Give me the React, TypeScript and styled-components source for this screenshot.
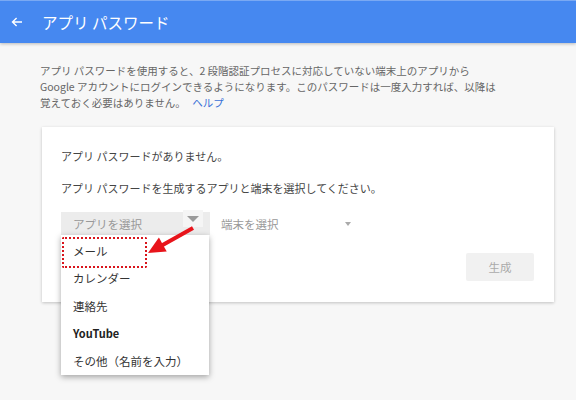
import React from "react";
import styled, { createGlobalStyle } from "styled-components";

const GlobalStyle = createGlobalStyle`
  html, body {
    margin: 0;
    padding: 0;
    background: #f7f7f7;
    font-family: "Noto Sans CJK JP", "Noto Sans", sans-serif;
  }
`;

const menuItems = [
  { label: "メール", bold: false },
  { label: "カレンダー", bold: false },
  { label: "連絡先", bold: false },
  { label: "YouTube", bold: true },
  { label: "その他（名前を入力）", bold: false },
];

export default function App() {
  return (
    <Page>
      <GlobalStyle />
      <Header>
        <BackIcon viewBox="0 0 12 12">
          <path d="M11 6H1.8M5.6 2L1.5 6l4.1 4" fill="none" stroke="#fff" strokeWidth="1.4" />
        </BackIcon>
        <Title>アプリ パスワード</Title>
      </Header>
      <Content>
        <Description>
          アプリ パスワードを使用すると、2 段階認証プロセスに対応していない端末上のアプリから
          <br />
          Google アカウントにログインできるようになります。このパスワードは一度入力すれば、以降は
          <br />
          覚えておく必要はありません。 <HelpLink>ヘルプ</HelpLink>
        </Description>
        <Card>
          <CardText>アプリ パスワードがありません。</CardText>
          <CardText>アプリ パスワードを生成するアプリと端末を選択してください。</CardText>
          <SelectRow>
            <AppSelect>
              <SelectLabel>アプリを選択</SelectLabel>
              <ArrowBox>
                <Caret />
              </ArrowBox>
              <Menu>
                {menuItems.map((item) => (
                  <MenuItem key={item.label} $bold={item.bold}>
                    {item.label}
                  </MenuItem>
                ))}
                <Highlight />
              </Menu>
            </AppSelect>
            <DeviceSelect>
              <SelectLabel>端末を選択</SelectLabel>
              <Caret $small />
            </DeviceSelect>
          </SelectRow>
          <ButtonRow>
            <GenerateButton>生成</GenerateButton>
          </ButtonRow>
        </Card>
      </Content>
      <Pointer viewBox="0 0 576 400">
        <line x1="193" y1="228" x2="160" y2="246.5" stroke="#e8141b" strokeWidth="4" />
        <polygon points="148,253 158.9,237.6 166.7,251.6" fill="#e8141b" />
      </Pointer>
    </Page>
  );
}

const Page = styled.div`
  position: relative;
  width: 576px;
  height: 400px;
  overflow: hidden;
  background: #f7f7f7;
`;

const Header = styled.div`
  height: 43px;
  background: #4688f0;
  border-top: 1px solid #7aa9f3;
  box-sizing: border-box;
  box-shadow: 0 1px 3px rgba(0, 0, 0, 0.25);
  display: flex;
  align-items: center;
  padding-left: 11px;
`;

const BackIcon = styled.svg`
  width: 12px;
  height: 12px;
  margin-right: 19px;
`;

const Title = styled.div`
  color: #fff;
  font-size: 15.5px;
  font-weight: 400;
`;

const Content = styled.div`
  padding: 0 22px 0 42px;
`;

const Description = styled.p`
  margin: 20px 0 0 -2px;
  font-size: 10.5px;
  line-height: 16px;
  color: #666;
  white-space: nowrap;
`;

const HelpLink = styled.a`
  color: #3b72d8;
  margin-left: 4px;
`;

const Card = styled.div`
  margin-top: 16px;
  width: 512px;
  box-sizing: border-box;
  background: #fff;
  box-shadow: 0 1px 3px rgba(0, 0, 0, 0.22);
  padding: 21px 20px 21px 19px;
  display: flex;
  flex-direction: column;
`;

const CardText = styled.div`
  font-size: 11px;
  line-height: 16px;
  color: #444;
  margin-bottom: 16px;
`;

const SelectRow = styled.div`
  display: flex;
  align-items: center;
  gap: 11px;
`;

const AppSelect = styled.div`
  position: relative;
  width: 149px;
  height: 23px;
  background: #ececec;
  display: flex;
  align-items: center;
  padding-left: 12px;
  box-sizing: border-box;
`;

const SelectLabel = styled.span`
  font-size: 11.5px;
  color: #999;
  flex: 1;
`;

const ArrowBox = styled.div`
  position: absolute;
  right: 7px;
  top: -2px;
  width: 20px;
  height: 17px;
  background: #f5f5f5;
  display: flex;
  align-items: center;
  justify-content: center;
`;

const Caret = styled.span<{ $small?: boolean }>`
  width: 0;
  height: 0;
  border-left: ${(p) => (p.$small ? 3.5 : 6)}px solid transparent;
  border-right: ${(p) => (p.$small ? 3.5 : 6)}px solid transparent;
  border-top: ${(p) => (p.$small ? 4 : 6)}px solid ${(p) => (p.$small ? "#aaa" : "#9a9a9a")};
`;

const DeviceSelect = styled.div`
  width: 130px;
  height: 23px;
  display: flex;
  align-items: center;
  padding-right: 2px;
`;

const Menu = styled.div`
  position: absolute;
  left: 0;
  top: 23px;
  width: 148px;
  padding-top: 2px;
  background: #fff;
  box-shadow: 0 2px 6px rgba(0, 0, 0, 0.35);
  z-index: 2;
`;

const MenuItem = styled.div<{ $bold: boolean }>`
  height: 27.5px;
  display: flex;
  align-items: center;
  padding-left: 12px;
  font-size: ${(p) => (p.$bold ? 11 : 11.5)}px;
  color: ${(p) => (p.$bold ? "#222" : "#333")};
  font-weight: ${(p) => (p.$bold ? 700 : 400)};
`;

const Highlight = styled.div`
  position: absolute;
  left: 1px;
  top: 2px;
  width: 85px;
  height: 31px;
  box-sizing: border-box;
  border: 2px dotted #d9141b;
  border-radius: 2px;
`;

const ButtonRow = styled.div`
  display: flex;
  justify-content: flex-end;
  margin-top: 18px;
`;

const GenerateButton = styled.button`
  width: 68px;
  height: 28px;
  border: none;
  background: #f1f1f1;
  color: #aaa;
  font-family: inherit;
  font-size: 11.5px;
  border-radius: 2px;
`;

const Pointer = styled.svg`
  position: absolute;
  left: 0;
  top: 0;
  width: 576px;
  height: 400px;
  pointer-events: none;
  z-index: 3;
`;
